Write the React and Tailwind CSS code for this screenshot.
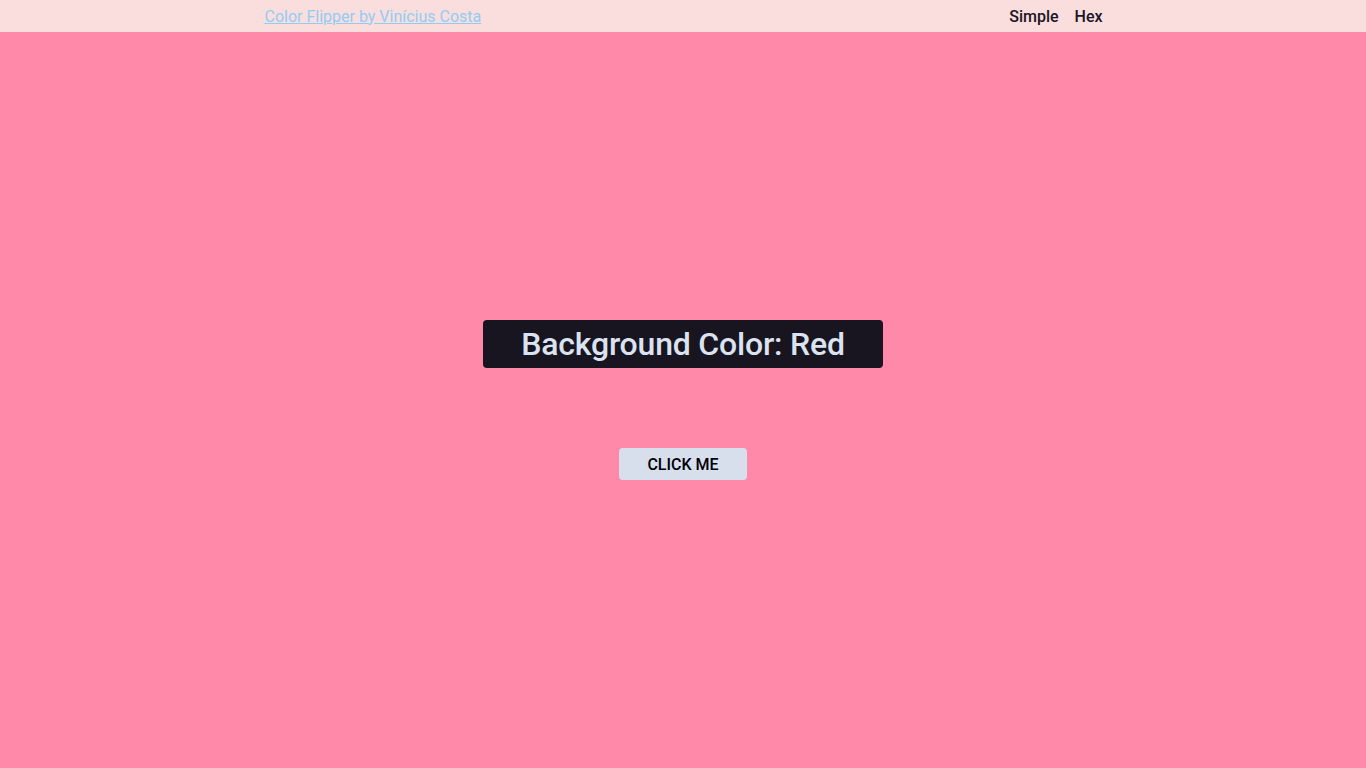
export default function App() {
  return (
    <div className="min-h-screen flex flex-col bg-[#fe89a9]" style={{ fontFamily: "Roboto, 'Liberation Sans', sans-serif" }}>
      <header className="h-8 bg-[#fadddd] flex items-center pt-px">
        <div className="w-[837px] mx-auto flex items-center justify-between">
          <a href="#" className="text-base underline text-[#90cdf4]">Color Flipper by Vinícius Costa</a>
          <nav className="flex items-center gap-4 text-base font-medium text-[#1a1625] mr-[-1px]">
            <a href="#">Simple</a>
            <a href="#">Hex</a>
          </nav>
        </div>
      </header>
      <main className="flex-1 flex flex-col items-center justify-center gap-20">
        <div className="w-[400px] h-12 rounded bg-[#181520] flex items-center justify-center text-[32px] font-medium tracking-[-0.2px] text-[#dbe3f1]">
          Background Color: Red
        </div>
        <button className="w-32 h-8 pt-px rounded bg-[#d7deec] text-base font-medium text-black">CLICK ME</button>
      </main>
    </div>
  );
}
